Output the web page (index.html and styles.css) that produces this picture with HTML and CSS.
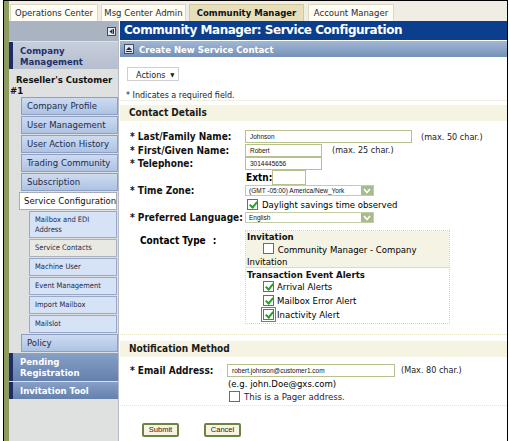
FILE: index.html
```html
<!DOCTYPE html>
<html>
<head>
<meta charset="utf-8">
<link rel="stylesheet" href="styles.css">
</head>
<body>
<div class="frame">
  <div class="strip"></div>
  <div class="page">
    <div class="tabs">
      <span class="tab t1">Operations Center</span>
      <span class="tab t2">Msg Center Admin</span>
      <span class="tab t3 active">Community Manager</span>
      <span class="tab t4">Account Manager</span>
    </div>
    <div class="body">
      <aside class="side">
        <div class="side-top">
          <span class="ico-collapse"><svg width="9" height="9" viewBox="0 0 9 9"><rect x="0.5" y="0.5" width="8" height="8" fill="#e4e8ee" stroke="#3c4c6c"/><path d="M5.5 2 L2.5 4.5 L5.5 7 Z" fill="#1c2a4a"/><rect x="6" y="2" width="1" height="5" fill="#1c2a4a"/></svg></span>
        </div>
        <div class="grp">Company Management</div>
        <div class="cust">Reseller's Customer #1</div>
        <div class="nav">
          <div class="item">Company Profile</div>
          <div class="item">User Management</div>
          <div class="item">User Action History</div>
          <div class="item">Trading Community</div>
          <div class="item">Subscription</div>
          <div class="item sel">Service Configuration</div>
          <div class="sub two">Mailbox and EDI Address</div>
          <div class="sub cur">Service Contacts</div>
          <div class="sub">Machine User</div>
          <div class="sub">Event Management</div>
          <div class="sub">Import Mailbox</div>
          <div class="sub">Mailslot</div>
          <div class="item">Policy</div>
        </div>
        <div class="grp2 tall">Pending Registration</div>
        <div class="grp2">Invitation Tool</div>
      </aside>
      <main class="main">
        <div class="title">Community Manager: Service Configuration</div>
        <div class="subbar"><svg width="10" height="10" viewBox="0 0 10 10"><rect x="0.5" y="0.5" width="9" height="9" fill="#dfe6f0" stroke="#40506c"/><path d="M2 6 L5 3 L8 6 Z" fill="#1c2a4a"/><rect x="2" y="7" width="6" height="1" fill="#1c2a4a"/></svg><span>Create New Service Contact</span></div>
        <div class="actions-row"><span class="actions">Actions <span class="tri">&#9660;</span></span></div>
        <div class="req">* Indicates a required field.</div>
        <section class="sec">
          <div class="sec-head">Contact Details</div>
          <div class="form">
            <div class="lbl">* Last/Family Name:</div>
            <div class="val"><span class="inp w166">Johnson</span><span class="hint far">(max. 50 char.)</span></div>
            <div class="lbl">* First/Given Name:</div>
            <div class="val"><span class="inp w77">Robert</span><span class="hint">(max. 25 char.)</span></div>
            <div class="lbl">* Telephone:</div>
            <div class="val"><span class="inp w77">3014445656</span></div>
            <div class="lbl"></div>
            <div class="val extn"><b>Extn:</b><span class="inp w33"></span></div>
            <div class="lbl">* Time Zone:</div>
            <div class="val"><span class="sel-box">(GMT -05:00) America/New_York<span class="arr"><svg width="8" height="6" viewBox="0 0 8 6"><path d="M1 1 L4 4.5 L7 1" fill="none" stroke="#fff" stroke-width="1.6"/></svg></span></span></div>
            <div class="lbl"></div>
            <div class="val"><span class="cb on"></span><span class="cbt">Daylight savings time observed</span></div>
            <div class="lbl">* Preferred Language:</div>
            <div class="val"><span class="sel-box">English<span class="arr"><svg width="8" height="6" viewBox="0 0 8 6"><path d="M1 1 L4 4.5 L7 1" fill="none" stroke="#fff" stroke-width="1.6"/></svg></span></span></div>
          </div>
          <div class="ctype">
            <div class="ct-lbl"><b>Contact Type</b><b class="colon">:</b></div>
            <div class="ct-box">
              <div class="ct-inv">
                <div class="ct-h">Invitation</div>
                <div class="ct-wrap"><span class="cb"></span> Community Manager - Company Invitation</div>
              </div>
              <div class="ct-alerts">
                <div class="ct-h">Transaction Event Alerts</div>
                <div class="ct-row"><span class="cb on"></span><span>Arrival Alerts</span></div>
                <div class="ct-row"><span class="cb on"></span><span>Mailbox Error Alert</span></div>
                <div class="ct-row"><span class="cb on focus"></span><span>Inactivity Alert</span></div>
              </div>
            </div>
          </div>
        </section>
        <section class="sec notif">
          <div class="sec-head">Notification Method</div>
          <div class="email">
            <div class="lbl">* Email Address:</div>
            <div class="email-val">
              <div><span class="inp w167">robert.johnson@customer1.com</span><span class="hint">(Max. 80 char.)</span></div>
              <div class="eg">(e.g. john.Doe@gxs.com)</div>
              <div class="pager"><span class="cb"></span><span class="pt">This is a Pager address.</span></div>
            </div>
          </div>
        </section>
        <div class="buttons">
          <span class="btn">Submit</span>
          <span class="btn">Cancel</span>
        </div>
      </main>
    </div>
  </div>
</div>
</body>
</html>
```

FILE: styles.css
```css
* { box-sizing: border-box; }
html, body { margin: 0; padding: 0; background: #fff; }
body { width: 509px; height: 441px; overflow: hidden; font-family: "DejaVu Sans Condensed", "DejaVu Sans", sans-serif; color: #000; }

.frame {
  margin-left: 3px;
  width: 505px;
  height: 441px;
  border-left: 1px solid #000;
  border-right: 1px solid #000;
  border-top: 1px solid #000;
  display: flex;
}
.strip { width: 5px; background: #8d9c5e; flex: none; }
.page { flex: 1; display: flex; flex-direction: column; min-width: 0; }

/* tabs */
.tabs {
  height: 20px;
  background: #f0eee4;
  display: flex;
  align-items: flex-end;
  padding: 3px 0 0 1px;
  flex: none;
}
.tab {
  height: 17px;
  line-height: 16px;
  font-family: "DejaVu Sans", sans-serif;
  font-size: 8.5px;
  color: #2b2b2b;
  background: #fffdf4;
  border: 1px solid #dcd8c4;
  border-bottom: none;
  text-align: center;
  white-space: nowrap;
}
.t1 { width: 88px; }
.t2 { width: 85px; margin-left: 3px; }
.t3 { width: 115px; margin-left: 3px; }
.t4 { width: 86px; margin-left: 4px; }
.tab.active { background: #e7deba; font-weight: bold; color: #111; border-color: #d2c8a0; }

.body { flex: 1; display: flex; min-height: 0; }

/* sidebar */
.side {
  width: 110px;
  flex: none;
  background: #dfe1e0;
  border-right: 1px solid #b8bcc4;
  display: flex;
  flex-direction: column;
}
.side-top {
  height: 20px;
  background: #aab3c2;
  display: flex;
  justify-content: flex-end;
  align-items: center;
  padding-right: 2px;
  margin-bottom: 1px;
}
.ico-collapse { display: flex; }
.grp {
  height: 27px;
  background: linear-gradient(#c7cedb, #b6bfcf);
  border-left: 4px solid #1d2b66;
  color: #1f2f6e;
  font-weight: bold;
  font-size: 9.5px;
  line-height: 11px;
  padding: 3px 0 0 7px;
}
.cust {
  font-weight: bold;
  font-size: 9.5px;
  line-height: 11px;
  padding: 5px 1px 0 1px;
  text-indent: 6px;
  height: 28px;
  color: #111;
}
.nav { display: flex; flex-direction: column; gap: 1px; }
.item {
  margin-left: 12px;
  width: 97px;
  height: 18px;
  line-height: 16px;
  font-size: 9.5px;
  color: #1e2a48;
  padding-left: 5px;
  background: linear-gradient(#cddbf1, #aec3e2);
  border: 1px solid #8e9fc2;
  white-space: nowrap;
}
.item.sel {
  margin-left: 10px;
  width: 98px;
  padding-left: 4px;
  background: #fff;
  border-color: #a8acb8;
  color: #111;
  height: 18px;
}
.sub {
  margin-left: 20px;
  width: 88px;
  height: 18px;
  line-height: 16px;
  font-size: 7.5px;
  color: #1e2a48;
  padding-left: 5px;
  background: #d6e2f6;
  border: 1px solid #9aa8c8;
  white-space: nowrap;
}
.sub.two { height: 27px; white-space: normal; line-height: 10px; padding-top: 3px; }
.sub.cur { background: #e9e9e3; border-color: #aab0bc; }
.grp2 {
  margin-top: 1px;
  height: 17px;
  background: linear-gradient(#86a0c6, #6480ad);
  border-left: 4px solid #1d2b66;
  color: #fff;
  font-weight: bold;
  font-size: 9.5px;
  line-height: 11px;
  padding: 3px 0 0 7px;
}
.grp2.tall { height: 28px; padding-top: 3px; }

/* main */
.main {
  flex: 1;
  min-width: 0;
  margin-left: 1px;
  background: #fff;
  display: flex;
  flex-direction: column;
}
.title {
  height: 19px;
  background: #0c3e8e;
  color: #fff;
  font-family: "DejaVu Sans", sans-serif;
  font-weight: bold;
  font-size: 12px;
  letter-spacing: -0.45px;
  line-height: 19px;
  padding-left: 4px;
  white-space: nowrap;
}
.subbar {
  margin-top: 1px;
  height: 16px;
  background: linear-gradient(#a3b7d3, #7490b8);
  color: #fff;
  font-weight: bold;
  font-size: 9.5px;
  display: flex;
  align-items: center;
  gap: 5px;
  padding-left: 4px;
}
.subbar svg { flex: none; }
.actions-row { padding: 6px 0 0 7px; height: 27px; }
.actions {
  display: inline-block;
  height: 14px;
  width: 52px;
  line-height: 13px;
  font-size: 9px;
  padding-left: 8px;
  border: 1px solid #cfcfcf;
  background: #fff;
  color: #222;
  white-space: nowrap;
}
.tri { font-size: 6px; vertical-align: 1px; margin-left: 2px; }
.req {
  font-family: "DejaVu Sans", sans-serif;
  font-size: 8px;
  line-height: 9px;
  color: #222;
  padding: 7px 0 0 6px;
  height: 17px;
  border-bottom: 1px solid #f0eedc;
}

.sec { border-bottom: 1px dotted #e8e4c8; }
.sec-head {
  height: 16px;
  margin-top: 4px;
  background: #f5f3e2;
  font-weight: bold;
  font-size: 10px;
  line-height: 16px;
  padding-left: 9px;
  color: #1a1a1a;
}
.form {
  display: grid;
  grid-template-columns: 125px 1fr;
  grid-auto-rows: 13.5px;
  margin-top: 9px;
  font-size: 9.5px;
}
.lbl { font-weight: bold; font-size: 10px; padding-left: 10px; line-height: 13px; white-space: nowrap; color: #111; }
.val { display: flex; align-items: center; white-space: nowrap; }
.inp {
  display: inline-block;
  height: 13px;
  border: 1px solid #b8c08e;
  font-family: "Liberation Sans", Arial, sans-serif;
  font-size: 6.5px;
  line-height: 11px;
  padding-left: 4px;
  color: #111;
  background: #fff;
}
.w166 { width: 167px; }
.w167 { width: 168px; }
.w77 { width: 77px; }
.w33 { width: 34px; }
.hint { font-size: 9px; color: #222; margin-left: 10px; }
.hint.far { margin-left: 9px; }
.extn b { font-size: 10px; width: 27px; display: inline-block; padding-left: 1px; }
.extn .inp { height: 15px; }
.sel-box {
  position: relative;
  display: inline-block;
  width: 129px;
  height: 11px;
  border: 1px solid #c4cca4;
  font-family: "Liberation Sans", Arial, sans-serif;
  font-size: 6.5px;
  line-height: 9px;
  padding-left: 3px;
  color: #111;
}
.arr {
  position: absolute;
  right: 0; top: 0;
  width: 12px; height: 9px;
  background: #a9ba90;
  display: flex; align-items: center; justify-content: center;
}
.cb {
  display: inline-block;
  width: 11px; height: 11px;
  border: 1px solid #5c6e90;
  background: #fff;
  flex: none;
  position: relative;
  vertical-align: middle;
}
.cb.on::after {
  content: "";
  position: absolute;
  left: 3px; top: 0px;
  width: 3px; height: 6px;
  border: solid #2e9a2e;
  border-width: 0 2px 2px 0;
  transform: rotate(40deg);
}
.cb.focus { outline: 1px solid #6a7a98; outline-offset: 1px; }
.val .cb { margin-left: 2px; }
.cbt { margin-left: 4px; font-size: 9.5px; }

.ctype { display: flex; margin-top: 5px; padding-bottom: 10px; }
.ct-lbl { width: 125px; padding: 5px 0 0 20px; font-size: 10px; display: flex; }
.ct-lbl .colon { margin-left: 7px; }
.ct-box {
  width: 205px;
  border: 1px dotted #d8d4b4;
  font-size: 9.5px;
}
.ct-inv { background: #f5f3e3; border-bottom: 1px solid #dedac0; padding: 0 0 0 1px; height: 37px; }
.ct-h { font-weight: bold; line-height: 12px; color: #111; }
.ct-wrap { text-indent: 16px; line-height: 12px; }
.ct-wrap .cb { text-indent: 0; margin-right: 1px; vertical-align: -1px; }
.ct-alerts { padding: 0 0 1px 1px; }
.ct-alerts .ct-h { line-height: 11px; padding-top: 1px; }
.ct-row { display: flex; align-items: center; height: 14px; padding-left: 16px; }
.ct-row span:last-child { margin-left: 3px; }

.notif .sec-head { margin-top: 6px; }
.email { display: flex; padding: 7px 0 2px 0; }
.email .lbl { width: 107px; }
.email-val { font-size: 9.5px; }
.email-val .hint { margin-left: 6px; }
.eg { margin-top: 1px; margin-left: 1px; line-height: 12px; }
.pager { display: flex; align-items: center; margin-left: 2px; height: 13px; }
.pt { margin-left: 4px; color: #2a1a3a; }

.buttons { display: flex; gap: 25px; padding: 17px 0 0 22px; }
.btn {
  display: inline-block;
  width: 37px;
  height: 14px;
  border: 2px solid #6a8448;
  border-radius: 2px;
  background: #f7f4e2;
  font-family: "Liberation Sans", Arial, sans-serif;
  font-size: 7.5px;
  line-height: 10px;
  text-align: center;
  color: #222;
}
```
